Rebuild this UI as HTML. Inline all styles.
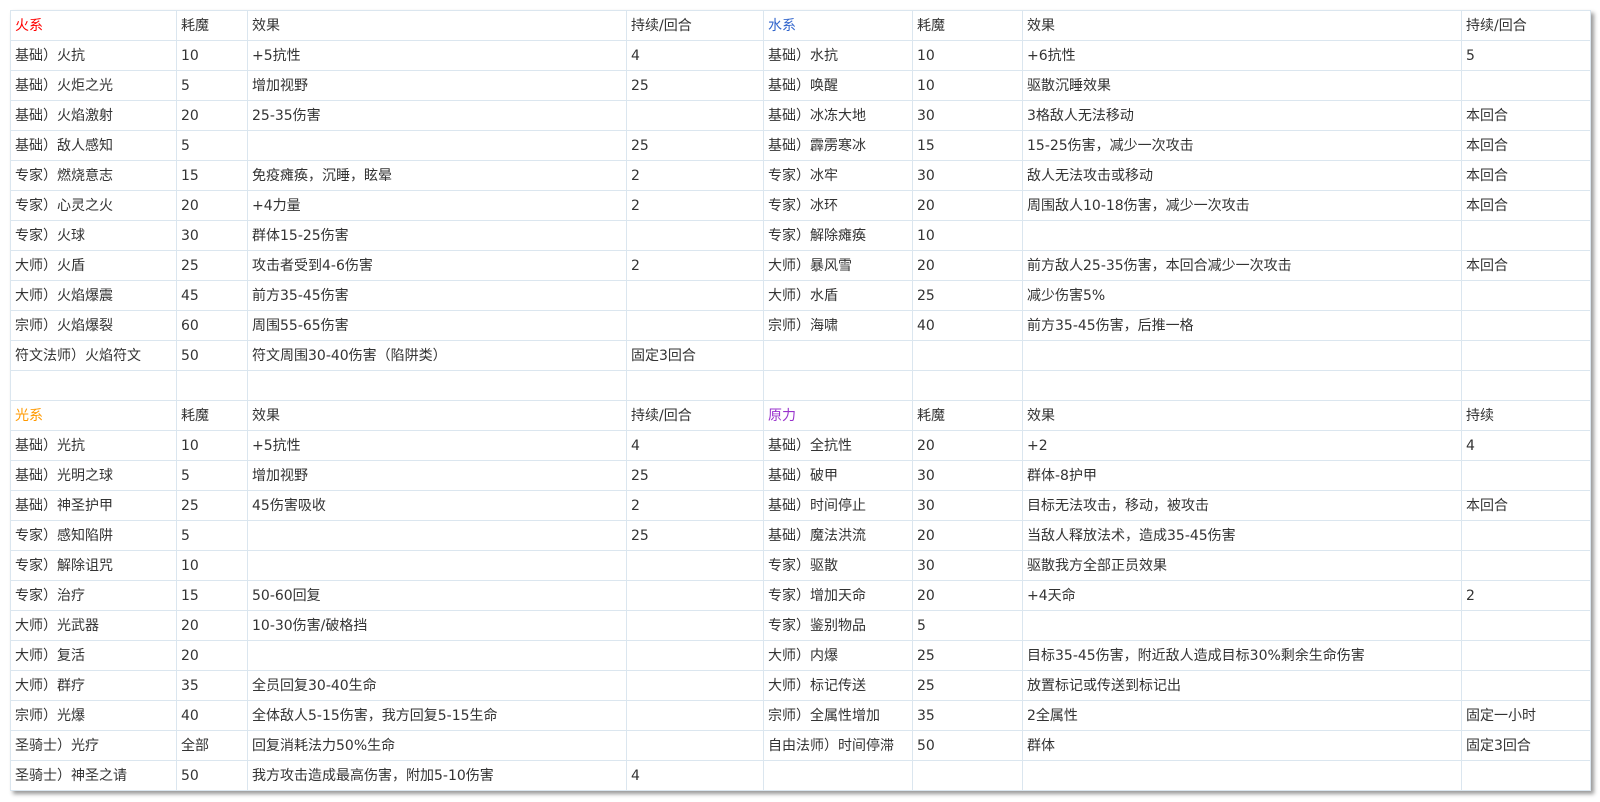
<!DOCTYPE html>
<html><head><meta charset="utf-8"><style>
html,body{margin:0;padding:0;background:#fff;width:1600px;height:802px;overflow:hidden}
table{position:absolute;left:10px;top:10px;border-collapse:collapse;table-layout:fixed;width:1580px;box-shadow:3px 3px 4px #999;background:#fff;font-family:"DejaVu Sans","Noto Sans CJK SC",sans-serif;font-size:14px;color:#333}
td{border:1px solid #dbe6ef;height:29px;padding:0 0 0 4px;white-space:nowrap;overflow:hidden;line-height:28px}
.r{color:#f00}.b{color:#36c}.o{color:#f90}.p{color:#93c}
</style></head><body>
<table>
<colgroup><col style="width:166px"><col style="width:71px"><col style="width:379px"><col style="width:137px"><col style="width:149px"><col style="width:110px"><col style="width:439px"><col style="width:129px"></colgroup>
<tr><td class="r">火系</td><td>耗魔</td><td>效果</td><td>持续/回合</td><td class="b">水系</td><td>耗魔</td><td>效果</td><td>持续/回合</td></tr>
<tr><td>基础）火抗</td><td>10</td><td>+5抗性</td><td>4</td><td>基础）水抗</td><td>10</td><td>+6抗性</td><td>5</td></tr>
<tr><td>基础）火炬之光</td><td>5</td><td>增加视野</td><td>25</td><td>基础）唤醒</td><td>10</td><td>驱散沉睡效果</td><td></td></tr>
<tr><td>基础）火焰激射</td><td>20</td><td>25-35伤害</td><td></td><td>基础）冰冻大地</td><td>30</td><td>3格敌人无法移动</td><td>本回合</td></tr>
<tr><td>基础）敌人感知</td><td>5</td><td></td><td>25</td><td>基础）霹雳寒冰</td><td>15</td><td>15-25伤害，减少一次攻击</td><td>本回合</td></tr>
<tr><td>专家）燃烧意志</td><td>15</td><td>免疫瘫痪，沉睡，眩晕</td><td>2</td><td>专家）冰牢</td><td>30</td><td>敌人无法攻击或移动</td><td>本回合</td></tr>
<tr><td>专家）心灵之火</td><td>20</td><td>+4力量</td><td>2</td><td>专家）冰环</td><td>20</td><td>周围敌人10-18伤害，减少一次攻击</td><td>本回合</td></tr>
<tr><td>专家）火球</td><td>30</td><td>群体15-25伤害</td><td></td><td>专家）解除瘫痪</td><td>10</td><td></td><td></td></tr>
<tr><td>大师）火盾</td><td>25</td><td>攻击者受到4-6伤害</td><td>2</td><td>大师）暴风雪</td><td>20</td><td>前方敌人25-35伤害，本回合减少一次攻击</td><td>本回合</td></tr>
<tr><td>大师）火焰爆震</td><td>45</td><td>前方35-45伤害</td><td></td><td>大师）水盾</td><td>25</td><td>减少伤害5%</td><td></td></tr>
<tr><td>宗师）火焰爆裂</td><td>60</td><td>周围55-65伤害</td><td></td><td>宗师）海啸</td><td>40</td><td>前方35-45伤害，后推一格</td><td></td></tr>
<tr><td>符文法师）火焰符文</td><td>50</td><td>符文周围30-40伤害（陷阱类）</td><td>固定3回合</td><td></td><td></td><td></td><td></td></tr>
<tr><td></td><td></td><td></td><td></td><td></td><td></td><td></td><td></td></tr>
<tr><td class="o">光系</td><td>耗魔</td><td>效果</td><td>持续/回合</td><td class="p">原力</td><td>耗魔</td><td>效果</td><td>持续</td></tr>
<tr><td>基础）光抗</td><td>10</td><td>+5抗性</td><td>4</td><td>基础）全抗性</td><td>20</td><td>+2</td><td>4</td></tr>
<tr><td>基础）光明之球</td><td>5</td><td>增加视野</td><td>25</td><td>基础）破甲</td><td>30</td><td>群体-8护甲</td><td></td></tr>
<tr><td>基础）神圣护甲</td><td>25</td><td>45伤害吸收</td><td>2</td><td>基础）时间停止</td><td>30</td><td>目标无法攻击，移动，被攻击</td><td>本回合</td></tr>
<tr><td>专家）感知陷阱</td><td>5</td><td></td><td>25</td><td>基础）魔法洪流</td><td>20</td><td>当敌人释放法术，造成35-45伤害</td><td></td></tr>
<tr><td>专家）解除诅咒</td><td>10</td><td></td><td></td><td>专家）驱散</td><td>30</td><td>驱散我方全部正员效果</td><td></td></tr>
<tr><td>专家）治疗</td><td>15</td><td>50-60回复</td><td></td><td>专家）增加天命</td><td>20</td><td>+4天命</td><td>2</td></tr>
<tr><td>大师）光武器</td><td>20</td><td>10-30伤害/破格挡</td><td></td><td>专家）鉴别物品</td><td>5</td><td></td><td></td></tr>
<tr><td>大师）复活</td><td>20</td><td></td><td></td><td>大师）内爆</td><td>25</td><td>目标35-45伤害，附近敌人造成目标30%剩余生命伤害</td><td></td></tr>
<tr><td>大师）群疗</td><td>35</td><td>全员回复30-40生命</td><td></td><td>大师）标记传送</td><td>25</td><td>放置标记或传送到标记出</td><td></td></tr>
<tr><td>宗师）光爆</td><td>40</td><td>全体敌人5-15伤害，我方回复5-15生命</td><td></td><td>宗师）全属性增加</td><td>35</td><td>2全属性</td><td>固定一小时</td></tr>
<tr><td>圣骑士）光疗</td><td>全部</td><td>回复消耗法力50%生命</td><td></td><td>自由法师）时间停滞</td><td>50</td><td>群体</td><td>固定3回合</td></tr>
<tr><td>圣骑士）神圣之请</td><td>50</td><td>我方攻击造成最高伤害，附加5-10伤害</td><td>4</td><td></td><td></td><td></td><td></td></tr>
</table>
</body></html>
